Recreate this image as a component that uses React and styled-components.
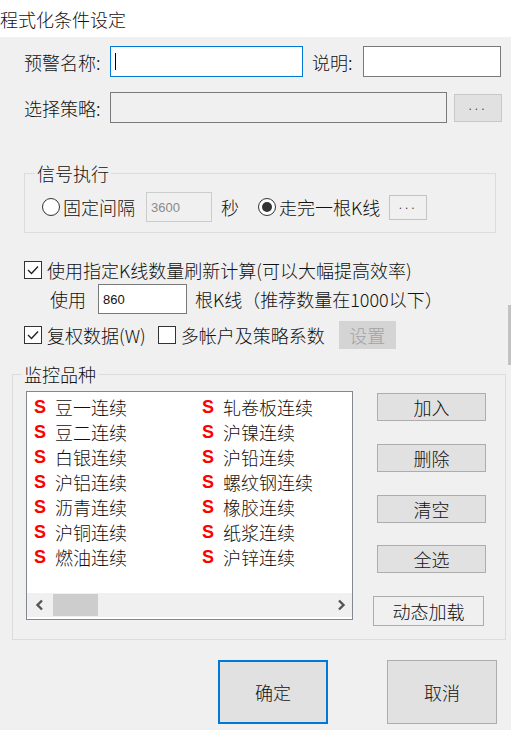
import React from 'react';
import styled, { createGlobalStyle } from 'styled-components';

const GlobalStyle = createGlobalStyle`
    html, body {
        margin: 0;
        padding: 0;
        background: #ffffff;
    }
    body {
        font-family: "Noto Sans CJK SC", "Microsoft YaHei", sans-serif;
        font-size: 18px;
        font-weight: 300;
        color: #111;
    }
`

const Title = styled.div`
    height: 37px;
    line-height: 38px;
    font-size: 18px;
    background: #ffffff;
    white-space: nowrap;
`
const Panel = styled.div`
    position: relative;
    background: #f0f0f0;
    height: 693px;
    padding-top: 9px;
    box-sizing: border-box;
`
const FieldRow = styled.div`
    display: flex;
    align-items: center;
    height: ${p => p.$h || 31}px;
    margin-top: ${p => p.$mt || 0}px;
    padding-left: ${p => p.$pl || 24}px;
    white-space: nowrap;
`
const Label = styled.span`
    display: inline-block;
    width: ${p => p.$w ? p.$w + 'px' : 'auto'};
    margin-left: ${p => p.$ml || 0}px;
    line-height: 20px;
    flex-shrink: 0;
`
const TextBox = styled.div`
    box-sizing: border-box;
    width: ${p => p.$w}px;
    height: ${p => p.$h || 31}px;
    margin-left: ${p => p.$ml || 0}px;
    background: ${p => p.$disabled ? '#f0f0f0' : '#ffffff'};
    border: 1px solid ${p => p.$focus ? '#0078d7' : p.$light ? '#cccccc' : '#7a7a7a'};
    display: flex;
    align-items: center;
    padding-left: 4px;
    font-family: "Liberation Sans", Arial, sans-serif;
    font-weight: 400;
    font-size: 13px;
    color: ${p => p.$light ? '#8a8a8a' : '#111'};
    flex-shrink: 0;
`
const Caret = styled.span`
    display: inline-block;
    width: 1px;
    height: 17px;
    background: #000;
`
const DotsButton = styled.div`
    box-sizing: border-box;
    width: ${p => p.$w}px;
    height: ${p => p.$h}px;
    margin-left: ${p => p.$ml || 0}px;
    background: ${p => p.$flat ? '#f0f0f0' : '#e1e1e1'};
    border: 1px solid ${p => p.$flat ? '#c4c4c4' : '#c9c9c9'};
    display: flex;
    align-items: center;
    justify-content: center;
    font-family: "Liberation Sans", Arial, sans-serif;
    font-weight: 400;
    font-size: 12px;
    letter-spacing: 3px;
    color: #444;
    padding-bottom: 4px;
    flex-shrink: 0;
`
const Group = styled.fieldset`
    margin: ${p => p.$mt}px 0 0 ${p => p.$ml}px;
    width: ${p => p.$w}px;
    box-sizing: border-box;
    padding: 0;
    border: 1px solid #dcdcdc;
    min-inline-size: 0;
`
const Legend = styled.legend`
    margin-left: ${p => p.$ml}px;
    padding: 0 2px;
    line-height: 20px;
    font-size: 18px;
`
const RadioCircle = styled.span`
    box-sizing: border-box;
    width: 18px;
    height: 18px;
    border-radius: 50%;
    border: 1px solid #333;
    background: #fff;
    margin-left: ${p => p.$ml || 0}px;
    margin-right: 3px;
    display: inline-flex;
    align-items: center;
    justify-content: center;
    flex-shrink: 0;
    &::after {
        content: '';
        width: 10px;
        height: 10px;
        border-radius: 50%;
        background: ${p => p.$checked ? '#333' : 'transparent'};
    }
`
const CheckBox = styled.span`
    box-sizing: border-box;
    width: 18px;
    height: 18px;
    border: 1px solid #333;
    background: #fff;
    margin-left: ${p => p.$ml || 0}px;
    margin-right: 5px;
    display: inline-flex;
    align-items: center;
    justify-content: center;
    flex-shrink: 0;
`
const DisabledButton = styled.div`
    width: 57px;
    height: 28px;
    margin-left: ${p => p.$ml || 0}px;
    background: #d4d4d4;
    color: #a2a2a2;
    display: flex;
    align-items: center;
    justify-content: center;
    line-height: 20px;
`
const ListArea = styled.div`
    display: flex;
    padding: 7px 0 0 13px;
    height: 255px;
    box-sizing: border-box;
`
const ListBox = styled.div`
    box-sizing: border-box;
    width: 327px;
    height: 229px;
    background: #ffffff;
    border: 1px solid #828790;
    display: flex;
    flex-direction: column;
`
const Items = styled.div`
    flex: 1;
    display: grid;
    grid-template-columns: 168px 1fr;
    grid-auto-rows: 25px;
    padding: 3px 0 0 7px;
    overflow: hidden;
`
const Item = styled.div`
    display: flex;
    align-items: center;
    white-space: nowrap;
    line-height: 25px;
`
const SMark = styled.span`
    font-family: "Liberation Sans", Arial, sans-serif;
    font-weight: bold;
    font-size: 18px;
    color: #ff0000;
    width: 21px;
`
const HScroll = styled.div`
    height: 24px;
    margin-bottom: 2px;
    background: #f0f0f0;
    display: flex;
    align-items: center;
    padding: 0 6px 0 8px;
`
const Thumb = styled.div`
    width: 45px;
    height: 22px;
    background: #cdcdcd;
    margin-left: 8px;
`
const ButtonColumn = styled.div`
    display: flex;
    flex-direction: column;
    justify-content: space-between;
    align-items: flex-start;
    height: 233px;
    margin-left: ${p => p.$ml}px;
    padding-top: 2px;
`
const SideButton = styled.div`
    box-sizing: border-box;
    width: ${p => p.$w || 109}px;
    height: ${p => p.$h || 28}px;
    margin-left: ${p => p.$ml || 0}px;
    background: ${p => p.$flat ? '#f0f0f0' : '#e1e1e1'};
    border: 1px solid #adadad;
    display: flex;
    align-items: center;
    justify-content: center;
    line-height: 20px;
`
const Footer = styled.div`
    display: flex;
    justify-content: flex-end;
    gap: 59px;
    padding-right: 14px;
    margin-top: 20px;
`
const DialogButton = styled.div`
    box-sizing: border-box;
    width: 110px;
    height: 64px;
    background: #e1e1e1;
    border: ${p => p.$primary ? '2px solid #0078d7' : '1px solid #adadad'};
    display: flex;
    align-items: center;
    justify-content: center;
    line-height: 20px;
`
const ScrollThumb = styled.div`
    position: absolute;
    right: 0;
    top: 268px;
    width: 3px;
    height: 60px;
    background: #c2c2c2;
`

const Check = () => (
    <svg width="12" height="10" viewBox="0 0 12 10">
        <path d="M1 5 L4.5 8.5 L11 1.5" fill="none" stroke="#222" strokeWidth="1.4" />
    </svg>
)

const Chevron = ({ dir }) => (
    <svg width="10" height="12" viewBox="0 0 10 12">
        <path d={dir === 'left' ? 'M7 1.5 L2.5 6 L7 10.5' : 'M3 1.5 L7.5 6 L3 10.5'} fill="none" stroke="#555" strokeWidth="2.4" />
    </svg>
)

const items = [
    ['豆一连续', '轧卷板连续'],
    ['豆二连续', '沪镍连续'],
    ['白银连续', '沪铅连续'],
    ['沪铝连续', '螺纹钢连续'],
    ['沥青连续', '橡胶连续'],
    ['沪铜连续', '纸浆连续'],
    ['燃油连续', '沪锌连续'],
]

export default function App() {
    return (
        <>
            <GlobalStyle />
            <Title>程式化条件设定</Title>
            <Panel>
                <FieldRow>
                    <Label $w={86}>预警名称:</Label>
                    <TextBox $w={193} $focus><Caret /></TextBox>
                    <Label $w={51} $ml={9}>说明:</Label>
                    <TextBox $w={138} />
                </FieldRow>
                <FieldRow $mt={15}>
                    <Label $w={86}>选择策略:</Label>
                    <TextBox $w={337} $disabled />
                    <DotsButton $w={48} $h={28} $ml={7}>...</DotsButton>
                </FieldRow>

                <Group $mt={40} $ml={24} $w={472}>
                    <Legend $ml={10}>信号执行</Legend>
                    <FieldRow $h={30} $mt={9} $pl={17} style={{ marginBottom: 10 }}>
                        <RadioCircle />
                        <Label>固定间隔</Label>
                        <TextBox $w={66} $h={30} $ml={11} $disabled $light>3600</TextBox>
                        <Label $ml={9}>秒</Label>
                        <RadioCircle $checked $ml={19} />
                        <Label>走完一根K线</Label>
                        <DotsButton $w={38} $h={25} $ml={9} $flat>...</DotsButton>
                    </FieldRow>
                </Group>

                <FieldRow $h={20} $mt={27}>
                    <CheckBox><Check /></CheckBox>
                    <Label>使用指定K线数量刷新计算(可以大幅提高效率)</Label>
                </FieldRow>
                <FieldRow $h={30} $mt={4} $pl={50}>
                    <Label>使用</Label>
                    <TextBox $w={89} $h={30} $ml={12}>860</TextBox>
                    <Label $ml={8}>根K线（推荐数量在1000以下）</Label>
                </FieldRow>
                <FieldRow $h={28} $mt={7}>
                    <CheckBox><Check /></CheckBox>
                    <Label>复权数据(W)</Label>
                    <CheckBox $ml={12} />
                    <Label>多帐户及策略系数</Label>
                    <DisabledButton $ml={14}>设置</DisabledButton>
                </FieldRow>

                <Group $mt={15} $ml={12} $w={494}>
                    <Legend $ml={9}>监控品种</Legend>
                    <ListArea>
                        <ListBox>
                            <Items>
                                {items.map((row, i) => row.map((name, j) => (
                                    <Item key={i + '-' + j}>
                                        <SMark>S</SMark>
                                        {name}
                                    </Item>
                                )))}
                            </Items>
                            <HScroll>
                                <Chevron dir="left" />
                                <Thumb />
                                <div style={{ flex: 1 }} />
                                <Chevron dir="right" />
                            </HScroll>
                        </ListBox>
                        <ButtonColumn $ml={24}>
                            <SideButton>加入</SideButton>
                            <SideButton>删除</SideButton>
                            <SideButton>清空</SideButton>
                            <SideButton>全选</SideButton>
                            <SideButton $w={111} $h={30} $ml={-4} $flat>动态加载</SideButton>
                        </ButtonColumn>
                    </ListArea>
                </Group>

                <Footer>
                    <DialogButton $primary>确定</DialogButton>
                    <DialogButton>取消</DialogButton>
                </Footer>
                <ScrollThumb />
            </Panel>
        </>
    );
}
